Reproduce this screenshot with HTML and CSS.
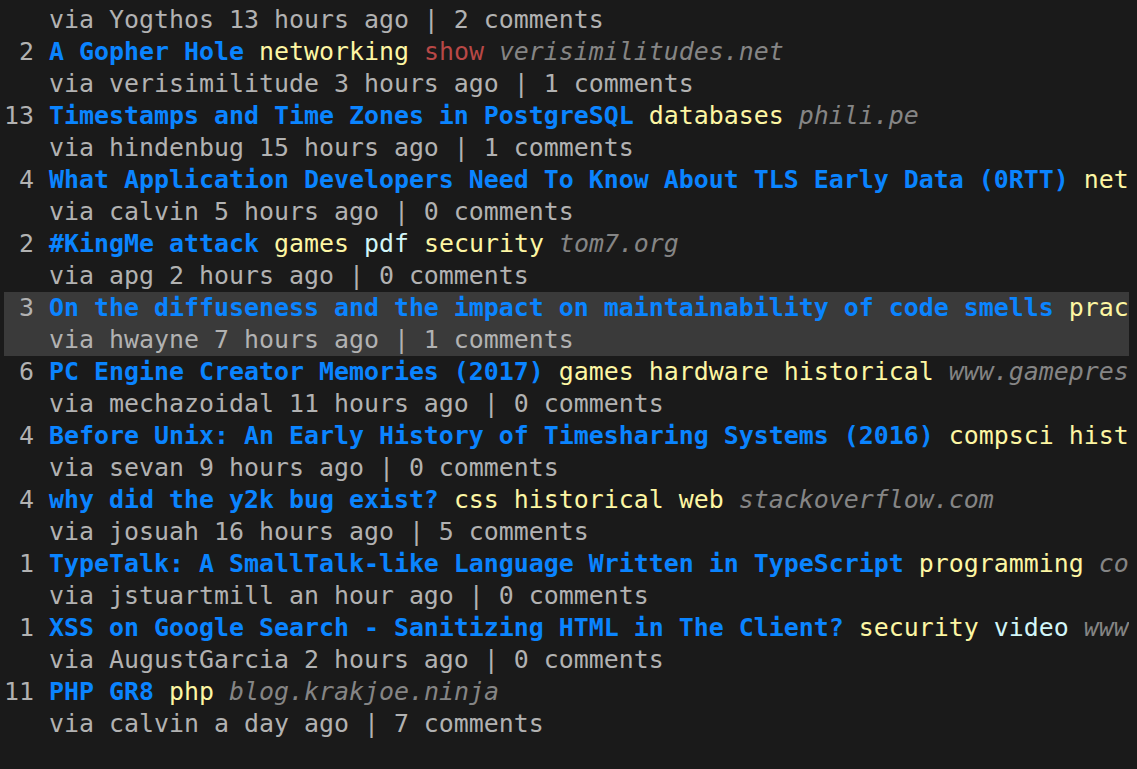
FILE: index.html
```html
<!DOCTYPE html>
<html>
<head>
<meta charset="utf-8">
<link rel="stylesheet" href="styles.css">
</head>
<body>
<div class="term">
  <div class="story">
    <div class="line">   <span class="meta">via Yogthos 13 hours ago | 2 comments</span></div>
  </div>
  <div class="story">
    <div class="line"><span class="score"> 2</span> <span class="title">A Gopher Hole</span> <span class="tag">networking</span> <span class="tag red">show</span> <span class="domain">verisimilitudes.net</span></div>
    <div class="line">   <span class="meta">via verisimilitude 3 hours ago | 1 comments</span></div>
  </div>
  <div class="story">
    <div class="line"><span class="score">13</span> <span class="title">Timestamps and Time Zones in PostgreSQL</span> <span class="tag">databases</span> <span class="domain">phili.pe</span></div>
    <div class="line">   <span class="meta">via hindenbug 15 hours ago | 1 comments</span></div>
  </div>
  <div class="story">
    <div class="line"><span class="score"> 4</span> <span class="title">What Application Developers Need To Know About TLS Early Data (0RTT)</span> <span class="tag">net</span></div>
    <div class="line">   <span class="meta">via calvin 5 hours ago | 0 comments</span></div>
  </div>
  <div class="story">
    <div class="line"><span class="score"> 2</span> <span class="title">#KingMe attack</span> <span class="tag">games</span> <span class="tag cyan">pdf</span> <span class="tag">security</span> <span class="domain">tom7.org</span></div>
    <div class="line">   <span class="meta">via apg 2 hours ago | 0 comments</span></div>
  </div>
  <div class="story selected">
    <div class="line"><span class="score"> 3</span> <span class="title">On the diffuseness and the impact on maintainability of code smells</span> <span class="tag">prac</span></div>
    <div class="line">   <span class="meta">via hwayne 7 hours ago | 1 comments</span></div>
  </div>
  <div class="story">
    <div class="line"><span class="score"> 6</span> <span class="title">PC Engine Creator Memories (2017)</span> <span class="tag">games hardware historical</span> <span class="domain">www.gamepres</span></div>
    <div class="line">   <span class="meta">via mechazoidal 11 hours ago | 0 comments</span></div>
  </div>
  <div class="story">
    <div class="line"><span class="score"> 4</span> <span class="title">Before Unix: An Early History of Timesharing Systems (2016)</span> <span class="tag">compsci hist</span></div>
    <div class="line">   <span class="meta">via sevan 9 hours ago | 0 comments</span></div>
  </div>
  <div class="story">
    <div class="line"><span class="score"> 4</span> <span class="title">why did the y2k bug exist?</span> <span class="tag">css historical web</span> <span class="domain">stackoverflow.com</span></div>
    <div class="line">   <span class="meta">via josuah 16 hours ago | 5 comments</span></div>
  </div>
  <div class="story">
    <div class="line"><span class="score"> 1</span> <span class="title">TypeTalk: A SmallTalk-like Language Written in TypeScript</span> <span class="tag">programming</span> <span class="domain">co</span></div>
    <div class="line">   <span class="meta">via jstuartmill an hour ago | 0 comments</span></div>
  </div>
  <div class="story">
    <div class="line"><span class="score"> 1</span> <span class="title">XSS on Google Search - Sanitizing HTML in The Client?</span> <span class="tag">security</span> <span class="tag cyan">video</span> <span class="domain">www</span></div>
    <div class="line">   <span class="meta">via AugustGarcia 2 hours ago | 0 comments</span></div>
  </div>
  <div class="story">
    <div class="line"><span class="score">11</span> <span class="title">PHP GR8</span> <span class="tag">php</span> <span class="domain">blog.krakjoe.ninja</span></div>
    <div class="line">   <span class="meta">via calvin a day ago | 7 comments</span></div>
  </div>
</div>
</body>
</html>
```

FILE: styles.css
```css
html, body {
  margin: 0;
  padding: 0;
  background: #1a1a1a;
  height: 100%;
  overflow: hidden;
}

.term {
  padding: 4px 0 0 4px;
  width: 1125px;
  font-family: "DejaVu Sans Mono", "Liberation Mono", monospace;
  font-size: 24.92px;
  line-height: 32px;
  color: #b4b4b4;
}

.line {
  height: 32px;
  white-space: pre;
  overflow: hidden;
}

.story.selected {
  background: #3a3a3a;
}

.score,
.meta {
  color: #b2b2b2;
}

.title {
  color: #0a84ff;
  font-weight: bold;
}

.tag {
  color: #fdf6a3;
}

.tag.red {
  color: #b84846;
}

.tag.cyan {
  color: #d2f6f8;
}

.domain {
  color: #858585;
  font-style: italic;
}
```
